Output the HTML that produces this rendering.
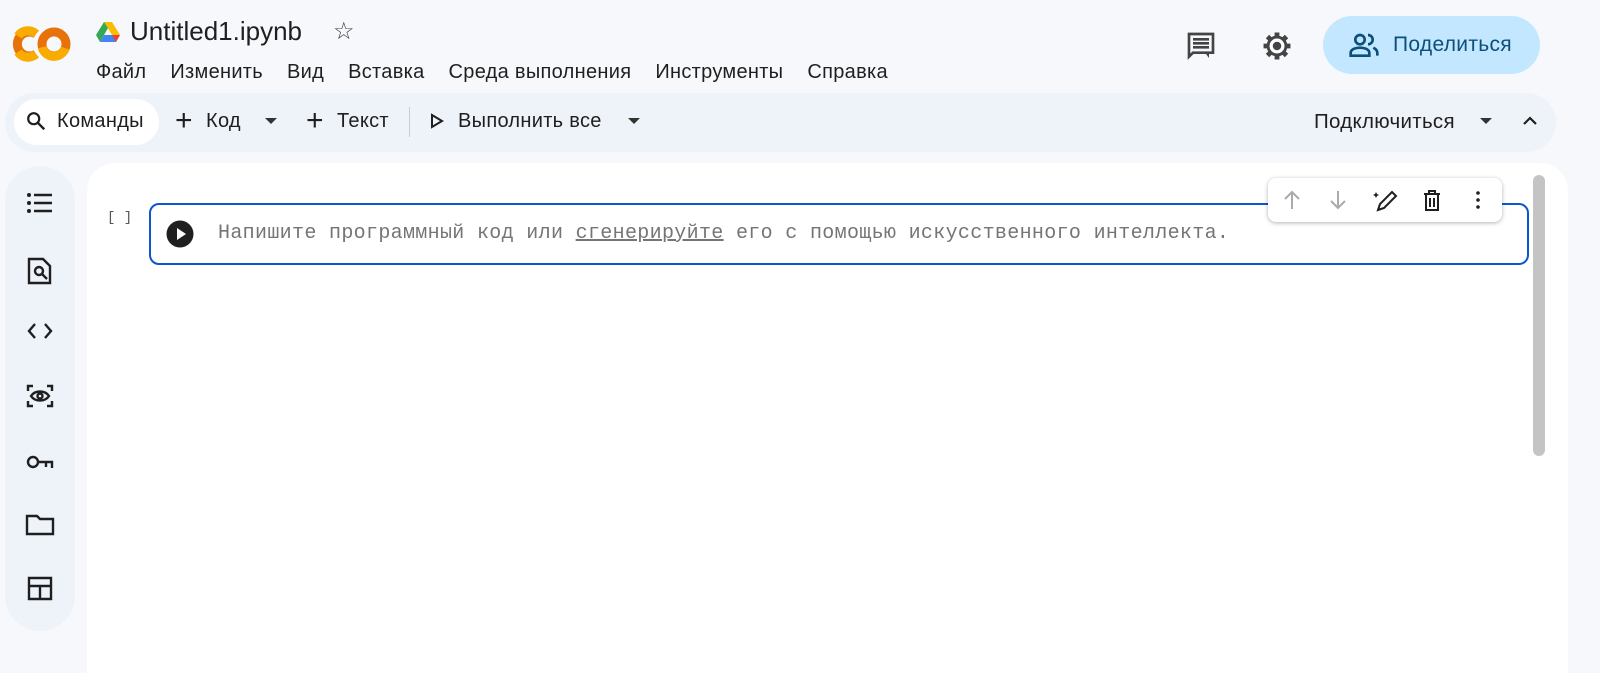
<!DOCTYPE html>
<html><head><meta charset="utf-8"><style>
*{box-sizing:border-box;margin:0;padding:0}
body{width:1600px;height:666px;overflow:hidden;background:#f7f8fc;font-family:"Liberation Sans",sans-serif;color:#1f1f1f;position:relative}
.abs{position:absolute}
.menu span{margin-right:24px}
.t{font-size:20px;letter-spacing:0.3px}
svg{display:block}
</style></head><body>
<!-- logo -->
<svg class="abs" style="left:10px;top:23px" width="62" height="42" viewBox="0 0 62 42">
<path d="M26 11A12 12 0 1 0 26 31" fill="none" stroke="#e8710a" stroke-width="9"/>
<path d="M8 13A12 12 0 0 1 26 11" fill="none" stroke="#f9ab00" stroke-width="9"/>
<path d="M8 29A12 12 0 0 0 26 31" fill="none" stroke="#f9ab00" stroke-width="9"/>
<circle cx="44" cy="21" r="12" fill="none" stroke="#e8710a" stroke-width="9"/>
<path d="M34 28A12 12 0 0 0 56 21" fill="none" stroke="#f9ab00" stroke-width="9" transform="rotate(20 44 21)"/>
</svg>
<!-- drive icon -->
<svg class="abs" style="left:96px;top:22px" width="24" height="20" viewBox="0 0 24 20">
<path d="M8 0h8l8 13h-8z" fill="#fbbc04"/><path d="M8 0L0 13l4 7 8-14z" fill="#34a853"/><path d="M4 20h16l4-7H8z" fill="#4285f4"/><path d="M20 20l4-7h-8z" fill="#ea4335"/>
</svg>
<div class="abs" style="left:130px;top:16px;font-size:26px">Untitled1.ipynb</div>
<div class="abs" style="left:333px;top:17px;font-size:24px;color:#444">☆</div>
<div class="abs menu t" style="left:96px;top:61px;white-space:nowrap"><span>Файл</span><span>Изменить</span><span>Вид</span><span>Вставка</span><span>Среда выполнения</span><span>Инструменты</span><span>Справка</span></div>
<!-- right icons -->
<svg class="abs" style="left:1185px;top:30px" width="32" height="32" viewBox="0 0 24 24"><path d="M3 3h18v14H6l-3 3zM6 7h12M6 10h12M6 13h12" fill="none" stroke="#444" stroke-width="2"/><path d="M18 17v4l-3-4z" fill="#444"/></svg>
<svg class="abs" style="left:1260px;top:29px" width="34" height="34" viewBox="0 0 24 24">
<g stroke="#444" stroke-width="3.4" stroke-linecap="butt">
<path d="M12 2.5v4M12 17.5v4M2.5 12h4M17.5 12h4M5.3 5.3l2.8 2.8M15.9 15.9l2.8 2.8M5.3 18.7l2.8-2.8M15.9 8.1l2.8-2.8"/></g>
<circle cx="12" cy="12" r="6.3" fill="#fff" stroke="#444" stroke-width="2"/><circle cx="12" cy="12" r="3" fill="#444"/></svg>
<div class="abs" style="left:1323px;top:16px;width:217px;height:58px;border-radius:29px;background:#c2e7ff"></div>
<svg class="abs" style="left:1348px;top:31px" width="32" height="28" viewBox="0 0 24 20"><circle cx="9" cy="6" r="3.5" fill="none" stroke="#0b4f7a" stroke-width="2"/><path d="M2 18v-2c0-3 4-4 7-4s7 1 7 4v2z" fill="none" stroke="#0b4f7a" stroke-width="2"/><path d="M15 2.5a3.5 3.5 0 010 7M19 12c2 1 3 2 3 4v2" fill="none" stroke="#0b4f7a" stroke-width="2"/></svg>
<div class="abs t" style="left:1393px;top:33px;font-size:21px;color:#0b4f7a">Поделиться</div>
<!-- toolbar -->
<div class="abs" style="left:5px;top:93px;width:1551px;height:59px;border-radius:30px;background:#eef2f9"></div>
<div class="abs" style="left:14px;top:99px;width:145px;height:46px;border-radius:23px;background:#fff"></div>
<svg class="abs" style="left:25px;top:110px" width="22" height="22" viewBox="0 0 24 24"><circle cx="9.5" cy="9.5" r="6" fill="none" stroke="#1f1f1f" stroke-width="2.4"/><path d="M14 14l7 7" stroke="#1f1f1f" stroke-width="2.6"/></svg>
<div class="abs t" style="left:57px;top:110px">Команды</div>
<div class="abs" style="left:175px;top:104px;font-size:30px;font-weight:300">+</div>
<div class="abs t" style="left:206px;top:110px">Код</div>
<div class="abs" style="left:265px;top:118px;border-left:6px solid transparent;border-right:6px solid transparent;border-top:6px solid #333"></div>
<div class="abs" style="left:306px;top:104px;font-size:30px;font-weight:300">+</div>
<div class="abs t" style="left:337px;top:110px">Текст</div>
<div class="abs" style="left:409px;top:107px;width:1px;height:30px;background:#ccc"></div>
<svg class="abs" style="left:430px;top:113px" width="14" height="16" viewBox="0 0 14 16"><path d="M2 2l10 6-10 6z" fill="none" stroke="#1f1f1f" stroke-width="2"/></svg>
<div class="abs t" style="left:458px;top:110px">Выполнить все</div>
<div class="abs" style="left:628px;top:118px;border-left:6px solid transparent;border-right:6px solid transparent;border-top:6px solid #333"></div>
<div class="abs t" style="left:1314px;top:110px;font-size:20.5px">Подключиться</div>
<div class="abs" style="left:1480px;top:118px;border-left:6px solid transparent;border-right:6px solid transparent;border-top:6px solid #333"></div>
<svg class="abs" style="left:1522px;top:115px" width="16" height="12" viewBox="0 0 16 12"><path d="M2 9l6-6 6 6" fill="none" stroke="#1f1f1f" stroke-width="2.2"/></svg>
<!-- sidebar -->
<div class="abs" style="left:5px;top:166px;width:70px;height:465px;border-radius:35px;background:#eef2f9"></div>
<svg class="abs" style="left:24px;top:188px" width="32" height="430" viewBox="0 0 32 430" fill="none" stroke="#1f1f1f" stroke-width="2.4">
<circle cx="5" cy="7" r="2" fill="#1f1f1f" stroke="none"/><circle cx="5" cy="15" r="2" fill="#1f1f1f" stroke="none"/><circle cx="5" cy="23" r="2" fill="#1f1f1f" stroke="none"/><path d="M10 7h18M10 15h18M10 23h18"/>
<path d="M5 71h14l7 7v17H5z"/><circle cx="15" cy="83" r="4"/><path d="M18 86l5 5"/>
<path d="M11 136l-6 7 6 7M21 136l6 7-6 7"/>
<path d="M4 203v-5h5M23 198h5v5M4 213v5h5M23 218h5v-5"/><path d="M7 208c4-6 14-6 18 0-4 6-14 6-18 0z"/><circle cx="16" cy="208" r="2.5"/>
<circle cx="9" cy="274" r="5"/><path d="M14 274h14v6M22 274v5"/>
<path d="M3 328h10l3 3h13v15H3z"/>
<path d="M5 390h22v21H5zM5 398h22M16 398v13"/>
</svg>
<!-- main panel -->
<div class="abs" style="left:87px;top:163px;width:1481px;height:510px;border-radius:28px 28px 0 0;background:#fff"></div>
<div class="abs" style="left:1533px;top:175px;width:12px;height:281px;border-radius:6px;background:#c4c4c4"></div>
<div class="abs" style="left:107px;top:210px;font-family:'Liberation Mono',monospace;font-size:14px;color:#555">[ ]</div>
<div class="abs" style="left:149px;top:203px;width:1380px;height:62px;border:2px solid #0b57d0;border-radius:10px"></div>
<svg class="abs" style="left:166px;top:220px" width="28" height="28" viewBox="0 0 28 28"><circle cx="14" cy="14" r="13.5" fill="#1f1f1f"/><path d="M11 8l9 6-9 6z" fill="#fff"/></svg>
<div class="abs" style="left:218px;top:222px;font-family:'Liberation Mono',monospace;font-size:20px;letter-spacing:0.33px;color:#757575;white-space:nowrap">Напишите программный код или <span style="text-decoration:underline">сгенерируйте</span> его с помощью искусственного интеллекта.</div>
<div class="abs" style="left:1268px;top:178px;width:234px;height:44px;border-radius:8px;background:#fff;box-shadow:0 1px 4px rgba(0,0,0,.3)"></div>
<svg class="abs" style="left:1278px;top:186px" width="220" height="28" viewBox="0 0 220 28" fill="none" stroke-width="2">
<path d="M14 23V6M7 13l7-7 7 7" stroke="#aaa"/>
<path d="M60 5v17M53 15l7 7 7-7" stroke="#aaa"/>
<path d="M100 24l2-6 12-12 4 4-12 12z" stroke="#1f1f1f"/><path d="M98 6l1 2 2 1-2 1-1 2-1-2-2-1 2-1z" fill="#1f1f1f" stroke="none"/>
<path d="M146 8h16M151 8V5h6v3M148 8v16h12V8M152 12v9M156 12v9" stroke="#1f1f1f"/>
<circle cx="200" cy="7" r="1.8" fill="#1f1f1f" stroke="none"/><circle cx="200" cy="14" r="1.8" fill="#1f1f1f" stroke="none"/><circle cx="200" cy="21" r="1.8" fill="#1f1f1f" stroke="none"/>
</svg>
</body></html>
